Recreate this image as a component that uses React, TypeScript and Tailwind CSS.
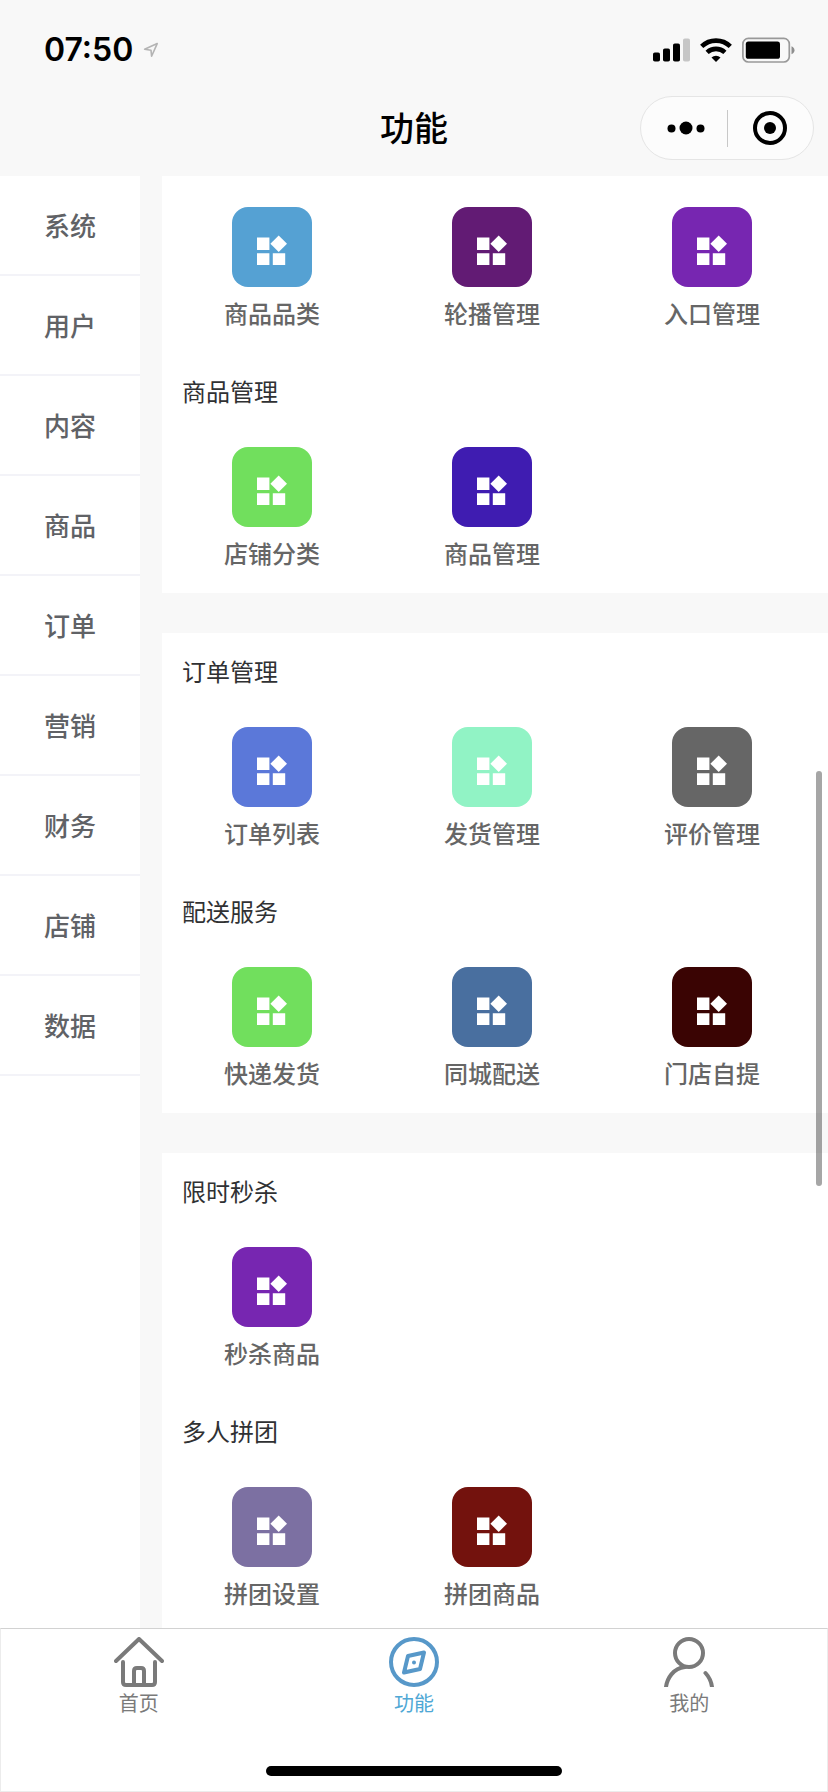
import React from "react";

type Entry = { label: string; color: string };
type Section = { title?: string; entries: Entry[] };

const categories = ["系统", "用户", "内容", "商品", "订单", "营销", "财务", "店铺", "数据"];

const cards: Section[][] = [
  [
    {
      entries: [
        { label: "商品品类", color: "bg-[#55a1d3]" },
        { label: "轮播管理", color: "bg-[#621b74]" },
        { label: "入口管理", color: "bg-[#7726b1]" },
      ],
    },
    {
      title: "商品管理",
      entries: [
        { label: "店铺分类", color: "bg-[#71df5d]" },
        { label: "商品管理", color: "bg-[#3f1cb1]" },
      ],
    },
  ],
  [
    {
      title: "订单管理",
      entries: [
        { label: "订单列表", color: "bg-[#5b78d9]" },
        { label: "发货管理", color: "bg-[#91f3c5]" },
        { label: "评价管理", color: "bg-[#666666]" },
      ],
    },
    {
      title: "配送服务",
      entries: [
        { label: "快递发货", color: "bg-[#71df5d]" },
        { label: "同城配送", color: "bg-[#496f9f]" },
        { label: "门店自提", color: "bg-[#3a0403]" },
      ],
    },
  ],
  [
    { title: "限时秒杀", entries: [{ label: "秒杀商品", color: "bg-[#7726b1]" }] },
    {
      title: "多人拼团",
      entries: [
        { label: "拼团设置", color: "bg-[#7c70a2]" },
        { label: "拼团商品", color: "bg-[#73120d]" },
      ],
    },
  ],
];

function StatusBar() {
  return (
    <div className="flex h-24 items-center justify-between pt-1 pr-[33px] pl-11">
      <div className="flex items-center gap-2.5">
        <span className="font-['Inter',sans-serif] text-[32px] leading-10 font-semibold">07:50</span>
        <svg width="16" height="16" viewBox="0 0 16 16" fill="none" stroke="#b4b4b4" strokeWidth="1.6" strokeLinejoin="round">
          <path d="M14.2 1.6 1.6 7.2 8 8.2 8.6 14.2Z" />
        </svg>
      </div>
      <div className="flex items-center gap-2.5">
        <svg width="37" height="24" viewBox="0 0 37 24">
          <rect x="0" y="14.5" width="7" height="9" rx="1.8" />
          <rect x="10" y="10.5" width="7" height="13" rx="1.8" />
          <rect x="20" y="5.5" width="7" height="18" rx="1.8" />
          <rect x="30" y="0.5" width="7" height="23" rx="1.8" fill="#c6c6c6" />
        </svg>
        <svg width="32" height="24" viewBox="0 0 32 24">
          <g fill="none" stroke="#000" strokeWidth="4.6">
            <path d="M1.7 8.4a20.5 20.5 0 0 1 28.6 0" />
            <path d="M7.1 14.4a13 13 0 0 1 17.8 0" />
          </g>
          <path d="M11.5 19.5a6.6 6.6 0 0 1 9 0L16 24Z" />
        </svg>
        <svg width="53" height="26" viewBox="0 0 53 26">
          <rect x="0.9" y="1.4" width="46.4" height="23.6" rx="5.5" fill="none" stroke="#999" strokeWidth="1.7" />
          <rect x="3.8" y="4.6" width="34.2" height="17.2" rx="2.6" />
          <path d="M49.5 9.2c4 1.5 4 6.5 0 8Z" fill="#8e8e8e" />
        </svg>
      </div>
    </div>
  );
}

function TitleBar() {
  return (
    <div className="grid h-20 grid-cols-3 items-start">
      <h1 className="col-start-2 flex h-16 items-center justify-center pb-1 text-[34px] font-medium">功能</h1>
      <div className="mr-3.5 flex h-16 w-[174px] items-center justify-self-end rounded-full border border-[#e5e5e5] bg-[#fcfcfc]">
        <button type="button" aria-label="更多" className="flex h-full flex-1 items-center justify-center">
          <svg width="42" height="14" viewBox="-4 0 42 14">
            <circle cx="4.5" cy="7.5" r="4" />
            <circle cx="19" cy="7" r="6.5" />
            <circle cx="33.5" cy="7.5" r="4" />
          </svg>
        </button>
        <span className="h-[37px] w-px bg-[#c8c8c8]" />
        <button type="button" aria-label="关闭" className="flex h-full flex-1 items-center justify-center">
          <svg width="34" height="34" viewBox="0 0 34 34">
            <circle cx="17" cy="17" r="15" fill="none" stroke="#000" strokeWidth="4" />
            <circle cx="17" cy="17" r="6" />
          </svg>
        </button>
      </div>
    </div>
  );
}

function EntryButton({ label, color }: Entry) {
  return (
    <button type="button" className="flex flex-col items-center gap-2">
      <span className={`flex size-20 items-center justify-center rounded-2xl ${color}`}>
        <svg width="36" height="36" viewBox="0 0 36 36" fill="#fff">
          <path d="M3 8.6h12.4V21H3ZM3 24.2h12.4v12H3ZM18.8 24.2h12.4v12H18.8Z" />
          <path d="M24.7 6.4 33 14.7 24.7 23 16.4 14.7Z" />
        </svg>
      </span>
      <span className="text-2xl leading-9 font-medium text-[#666]">{label}</span>
    </button>
  );
}

function SectionBlock({ title, entries }: Section) {
  return (
    <section>
      {title && <h2 className="flex h-[76px] items-center px-5 text-2xl text-[#303133]">{title}</h2>}
      <div className="grid h-[164px] grid-cols-3 items-start pt-[18px] pr-1.5">
        {entries.map((entry) => (
          <EntryButton key={entry.label} {...entry} />
        ))}
      </div>
    </section>
  );
}

function TabItem({ label, active, children }: { label: string; active?: boolean; children: React.ReactNode }) {
  return (
    <a href="#" aria-current={active ? "page" : undefined} className={`flex flex-1 flex-col items-center pt-2 ${active ? "text-[#4fa8d5]" : "text-[#7a7a7a]"}`}>
      <svg width="50" height="50" viewBox="0 0 50 50" fill="none" stroke={active ? "#5798c9" : "#7a7a7a"} strokeWidth="4" strokeLinecap="round" strokeLinejoin="round">
        {children}
      </svg>
      <span className="text-xl leading-8">{label}</span>
    </a>
  );
}

export default function App() {
  return (
    <div className="flex h-screen flex-col bg-[#f8f8f8] font-['Noto_Sans_CJK_SC',sans-serif] text-black">
      <header className="shrink-0">
        <StatusBar />
        <TitleBar />
      </header>

      <div className="relative flex min-h-0 flex-1 gap-[22px]">
        <nav className="w-[140px] shrink-0 bg-white">
          {categories.map((name) => (
            <a key={name} href="#" className="flex h-[100px] items-center justify-center border-b-2 border-[#f3f3f8] pb-0.5 text-[26px] font-medium text-[#606266]">
              {name}
            </a>
          ))}
        </nav>
        <main className="flex min-w-0 flex-1 flex-col gap-10 overflow-y-auto [scrollbar-width:none]">
          {cards.map((sections, i) => (
            <div key={i} className="shrink-0 bg-white first:pt-[13px]">
              {sections.map((section, j) => (
                <SectionBlock key={j} {...section} />
              ))}
            </div>
          ))}
        </main>
        <div className="absolute top-[595px] right-1.5 h-[415px] w-1.5 rounded-full bg-black/35" />
      </div>

      <footer className="relative flex h-[164px] shrink-0 border border-[#ececec] border-t-[#d2d2d2] bg-white">
        <TabItem label="首页">
          <path d="M2 24 25 2 48 24" />
          <path d="M9 25V45q0 3 3 3H38q3 0 3-3V25M20 47V34q0-3 3-3H27q3 0 3 3V47" />
        </TabItem>
        <TabItem label="功能" active>
          <circle cx="25" cy="25" r="23" />
          <path d="M19 19 35 15.5 31 32 15 35.5Z" />
          <circle cx="25" cy="25.5" r="2" fill="#5798c9" stroke="none" />
        </TabItem>
        <TabItem label="我的">
          <circle cx="25" cy="16" r="14" />
          <path d="M2 50C3 42 9 31 21 30M41.5 36Q47 42 48 50" />
        </TabItem>
        <div className="absolute bottom-[15px] left-1/2 h-2.5 w-[296px] -translate-x-1/2 rounded-full bg-black" />
      </footer>
    </div>
  );
}
